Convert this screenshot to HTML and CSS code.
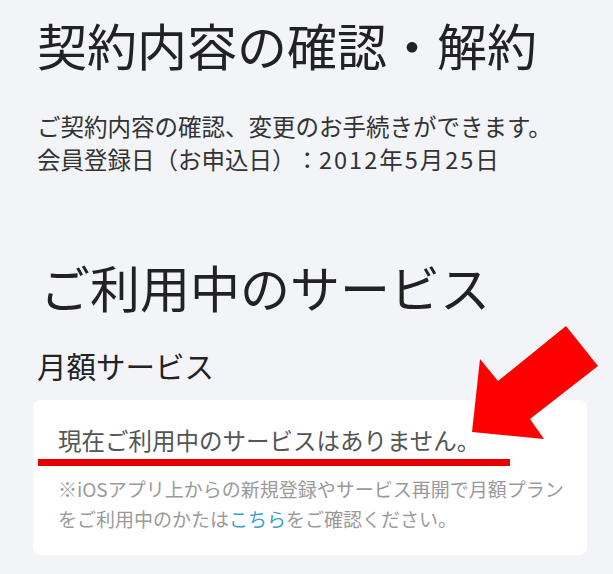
FILE: index.html
```html
<!DOCTYPE html>
<html lang="ja">
<head>
  <meta charset="UTF-8">
  <meta name="viewport" content="width=device-width, initial-scale=1">
  <title>契約内容の確認・解約</title>
  <link rel="stylesheet" href="styles.css">
</head>
<body>

  <div class="page">
    <h1>契約内容の確認・解約</h1>

    <p class="lead">
      ご契約内容の確認、変更のお手続きができます。<br>
      会員登録日（お申込日）：<span class="date">2012年5月25日</span>
    </p>

    <h2>ご利用中のサービス</h2>

    <h3>月額サービス</h3>

    <div class="card">
      <p class="empty">現在ご利用中のサービスはありません。</p>
      <span class="mark"></span>
      <p class="note">※iOSアプリ上からの新規登録やサービス再開で月額プランをご利用中のかたは<a href="#">こちら</a>をご確認ください。</p>
    </div>

    <!-- 注目の矢印 -->
    <svg class="arrow" width="613" height="574" viewBox="0 0 613 574">
      <polygon points="566,326 598,366 530,419 544,439 472,432 480,359 498,381" fill="#ff0000" />
    </svg>
  </div>

</body>
</html>
```

FILE: styles.css
```css
body {
  margin: 0;
  background-color: #f3f4f8;
  font-family: "Noto Sans CJK JP", "Noto Sans", sans-serif;
  color: #222;
  text-spacing-trim: space-all;
}
.page {
  position: relative;
  padding: 14px 26px 40px 37px;
}
h1 {
  margin: 0;
  font-size: 50px;
  font-weight: 400;
  line-height: 60px;
}
.lead {
  margin: 36px 0 0;
  font-size: 23.5px;
  line-height: 33px;
  color: #333;
}
.date {
  letter-spacing: 2px;
}
h2 {
  margin: 80px 0 0;
  font-size: 50px;
  font-weight: 400;
  line-height: 60px;
  padding-left: 3px;
}
h3 {
  margin: 29px 0 0;
  font-size: 29.5px;
  font-weight: 400;
  line-height: 40px;
}
.card {
  position: relative;
  margin: 15px 0 0 -4px;
  background: white;
  border-radius: 8px;
  padding: 23px 20px 21px 25px;
}
.empty {
  margin: 0;
  font-size: 23.5px;
  line-height: 34px;
  color: #555;
}
.mark {
  position: absolute;
  left: 5px;
  top: 59px;
  width: 472px;
  height: 7px;
  background: #e60000;
}
.note {
  margin: 17px 0 0;
  font-size: 19px;
  line-height: 30px;
  color: #9a9a9a;
}
.note a {
  color: #3a9fd0;
  text-decoration: none;
}
.arrow {
  position: absolute;
  left: 0;
  top: 0;
  pointer-events: none;
}
```
